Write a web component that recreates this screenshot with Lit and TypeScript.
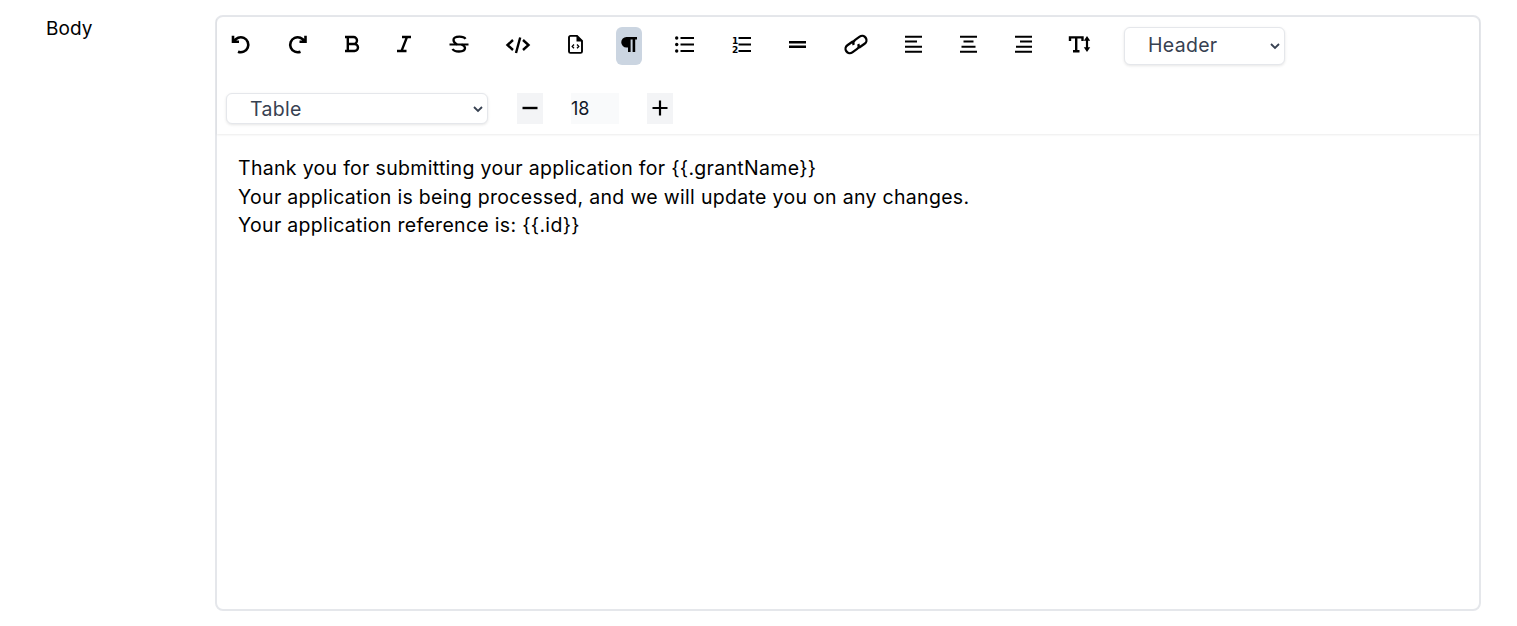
import { LitElement, html, css, svg } from "lit";
import { customElement } from "lit/decorators.js";

const line = (d: string, w: number) => svg`<path d=${d} fill="none" stroke="#000" stroke-width=${w}/>`;

const I: Record<string, any> = {
  undo: line("M5 3.800v6h6M6 9.500A7.500 7.500 0 1 1 10 19.700", 2.6),
  redo: line("M19.500 3.800v6h-6M18.500 9.500A7.500 7.500 0 1 0 14.500 19.700", 2.6),
  bold: line("M5 5h8.500a3.500 3.500 0 0 1 0 7H7.500M7.500 12h7a3.500 3.500 0 0 1 0 7H5M7.800 5v14", 2.4),
  italic: line("M10 5h9M5 19h9.500M15 5 9.500 19", 2.3),
  strike: svg`${line("M2.500 12.500h19", 2)}${line("M18.500 6.800C17.500 5.200 15 4.600 12.500 4.600 9 4.600 6.500 5.600 6.500 8c0 2 1.500 3.300 3.500 4.500", 2.3)}${line("M14.500 12.500c2 .8 3.500 2 3.500 3.500 0 2.500-2.500 3.500-6 3.500-3 0-5.500-.7-6.500-2.500", 2.3)}`,
  code: line("M8 8 2.500 13 8 18M18 8l5.500 5-5.500 5M15.200 5.500 11 21", 2.4),
  file: svg`${line("M14 3.900H7.500A1.500 1.500 0 0 0 6 5.400v14a1.500 1.500 0 0 0 1.500 1.500h10a1.500 1.500 0 0 0 1.500-1.500V9Z", 1.9)}<path d="M13.500 4v5.500H19Z"/>${line("m11 12.500-1.800 1.900 1.800 1.900M14 12.500l1.800 1.900-1.800 1.900", 1.3)}`,
  para: svg`<path d="M20 5H9.500a5 5 0 0 0 0 10.500H11V20h2.600V7.500h2V20h2.600V7.500H20Z"/>`,
  ul: svg`<circle cx="3.700" cy="6" r="1.700"/><circle cx="3.700" cy="12.500" r="1.700"/><circle cx="3.700" cy="19" r="1.700"/>${line("M7.500 6H21M7.500 12.500H21M7.500 19H21", 2.2)}`,
  ol: svg`${line("M9.500 6H22M9.500 12.500H22M9.500 19H22", 2.2)}<text x="3" y="12" font-size="9" font-weight="700" font-family="DejaVu Sans">1</text><text x="3" y="20.500" font-size="9" font-weight="700" font-family="DejaVu Sans">2</text>`,
  hr: line("M4 10.200h17M4 14.800h17", 2.4),
  link: svg`<g fill="none" stroke="#000" stroke-width="2.300" transform="translate(13 12.500) rotate(-35)"><path d="M-.5-4.300H-7.500a4.300 4.300 0 0 0 0 8.600H-2a4.300 4.300 0 0 0 4.200-3.400"/><path d="M.5 4.300H7.500a4.300 4.300 0 0 0 0-8.600H2a4.300 4.300 0 0 0-4.200 3.400"/></g>`,
  left: line("M4 4.700h17M4 9.500h12M4 14.700h17M4 19.700h17", 1.9),
  center: line("M4 4.700h17M7.500 9.500h10M5.500 14.700h14M4 19.700h17", 1.9),
  right: line("M4 4.700h17M9 9.500h12M5 14.700h16M4 19.700h17", 1.9),
  size: svg`${line("M2 9V5.400h12.500V9M8.200 5.400V19.300M5 19.300h6.500", 2.4)}${line("M19 7v10", 2.2)}<path d="M15.800 8.800 19 4l3.200 4.800ZM15.800 15.200l3.200 4.800 3.200-4.800Z"/>`,
};

const TOOLS: [string, number][] = [
  ["undo", 28], ["redo", 32], ["bold", 20], ["italic", 28], ["strike", 26], ["code", 34],
  ["file", 26], ["para", 26], ["ul", 30], ["ol", 26], ["hr", 30], ["link", 30],
  ["left", 30], ["center", 24], ["right", 30], ["size", 28],
];

@customElement("app-root")
export class AppRoot extends LitElement {
  static styles = css`
    :host { display: block; font-family: Inter, "Liberation Sans", sans-serif; color: #000; height: 626px; box-sizing: border-box; padding: 15px 36px 15px 46px; }
    .field { display: flex; height: 596px; }
    .label { width: 169px; font-size: 19px; line-height: 28px; letter-spacing: .1px; }
    .editor { flex: 1; border: 2px solid #e5e7eb; border-radius: 8px; display: flex; flex-direction: column; }
    .toolbar { padding: 10px 9px; display: flex; flex-direction: column; gap: 28px; box-shadow: 0 1px 2px rgba(0,0,0,.08); }
    .row1 { display: flex; gap: 28px; align-items: center; height: 38px; }
    .row2 { display: flex; align-items: center; height: 31px; }
    .btn { height: 38px; box-sizing: border-box; padding-bottom: 4px; display: flex; align-items: center; justify-content: center; border-radius: 6px; }
    .btn.on { background: #cbd5e1; }
    .btn svg { width: 24px; height: 24px; flex: none; overflow: visible; }
    select { appearance: none; font: inherit; font-size: 19.500px; letter-spacing: .3px; color: #374151; background: #fff; border: 1px solid #e5e7eb; border-radius: 6px; box-shadow: 0 1px 3px rgba(0,0,0,.1); box-sizing: border-box; padding: 0 0 0 23px; }
    .selwrap { position: relative; display: flex; }
    .chev { position: absolute; right: 5px; top: 50%; margin-top: -4px; width: 10px; height: 8px; pointer-events: none; }
    .h { width: 161px; height: 38px; margin-left: 2px; padding-bottom: 2px; }
    .t { width: 262px; height: 31px; }
    .step { width: 26px; height: 31px; padding-bottom: 2px; box-sizing: border-box; background: #f3f4f6; display: flex; align-items: center; justify-content: center; }
    .step svg { width: 18px; height: 18px; }
    .minus { margin-left: 29px; }
    .num { margin-left: 28px; width: 48px; height: 31px; background: #f9fafb; font-size: 18px; line-height: 31px; color: #111827; margin-right: 28px; }
    .body { padding: 20px 21px; font-size: 19.500px; line-height: 28.500px; letter-spacing: .31px; }
  `;
  render() {
    return html`<div class="field">
      <div class="label">Body</div>
      <div class="editor">
        <div class="toolbar">
          <div class="row1">
            ${TOOLS.map(([k, w]) => html`<div class="btn ${k === "para" ? "on" : ""}" style="width:${w}px"><svg viewBox="0 0 24 24">${I[k]}</svg></div>`)}
            <div class="selwrap"><select class="h"><option>Header</option></select>${this.chev()}</div>
          </div>
          <div class="row2">
            <div class="selwrap"><select class="t"><option>Table</option></select>${this.chev()}</div>
            <div class="step minus"><svg viewBox="0 0 18 18"><path d="M1.500 9h15" stroke="#000" stroke-width="2.400"/></svg></div>
            <div class="num">18</div>
            <div class="step"><svg viewBox="0 0 18 18"><path d="M1.500 9h15M9 1.500v15" stroke="#000" stroke-width="2.200"/></svg></div>
          </div>
        </div>
        <div class="body">
          <div>Thank you for submitting your application for {{.grantName}}</div>
          <div>Your application is being processed, and we will update you on any changes.</div>
          <div>Your application reference is: {{.id}}</div>
        </div>
      </div>
    </div>`;
  }
  chev() {
    return html`<svg class="chev" viewBox="0 0 10 8"><path d="M1 2l4 4 4-4" fill="none" stroke="#374151" stroke-width="1.800"/></svg>`;
  }
}
